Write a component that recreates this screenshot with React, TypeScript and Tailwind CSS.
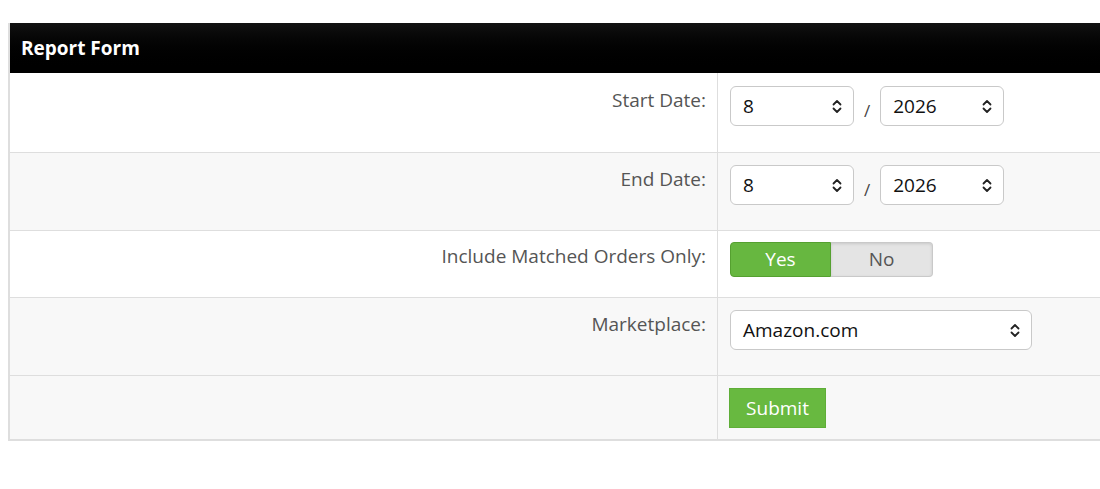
import React from "react";

const Chevrons = () => (
  <svg width="10" height="15" viewBox="0 0 10 15" fill="none" stroke="#222" strokeWidth="1.8" strokeLinecap="round" strokeLinejoin="round">
    <path d="M1.5 5.5 L5 2 L8.5 5.5" />
    <path d="M1.5 9.5 L5 13 L8.5 9.5" />
  </svg>
);

const FakeSelect = ({ value, w }: { value: string; w: string }) => (
  <div className={`${w} h-[40px] bg-white border border-[#c9c9c9] rounded-[6px] flex items-center justify-between pl-[12px] pr-[11px] text-[19px] text-[#111]`}>
    <span>{value}</span>
    <Chevrons />
  </div>
);

const Row = ({
  label,
  bg,
  h,
  labelPt,
  contentPt,
  last,
  children,
}: {
  label: string;
  bg: string;
  h: string;
  labelPt: string;
  contentPt: string;
  last?: boolean;
  children: React.ReactNode;
}) => (
  <div className={`flex ${h} ${bg} ${last ? "border-b-2" : "border-b"} border-[#dedede]`}>
    <div className={`w-[708px] shrink-0 text-right pr-[11px] ${labelPt} text-[19px] leading-[24px] text-[#555] border-r border-[#dedede]`}>
      {label}
    </div>
    <div className={`flex-1 pl-[12px] ${contentPt}`}>{children}</div>
  </div>
);

export default function App() {
  return (
    <div
      className="w-[1100px] h-[489px] overflow-hidden bg-white"
      style={{ fontFamily: '"Open Sans", "Noto Sans", sans-serif' }}
    >
      <div className="pt-[23px] pl-[8px]">
        <div className="w-[1130px] border-l-2 border-[#dedede]">
          <div className="h-[50px] bg-gradient-to-b from-[#111] to-[#000] flex items-center pl-[11px] text-white font-bold text-[19px]">
            Report Form
          </div>
          <Row label="Start Date:" bg="bg-white" h="h-[80px]" labelPt="pt-[15px]" contentPt="pt-[13px]">
            <div className="flex items-start">
              <FakeSelect value="8" w="w-[124px]" />
              <span className="mx-[10px] mt-[12px] text-[17px] text-[#444]">/</span>
              <FakeSelect value="2026" w="w-[124px]" />
            </div>
          </Row>
          <Row label="End Date:" bg="bg-[#f8f8f8]" h="h-[78px]" labelPt="pt-[14px]" contentPt="pt-[12px]">
            <div className="flex items-start">
              <FakeSelect value="8" w="w-[124px]" />
              <span className="mx-[10px] mt-[12px] text-[17px] text-[#444]">/</span>
              <FakeSelect value="2026" w="w-[124px]" />
            </div>
          </Row>
          <Row label="Include Matched Orders Only:" bg="bg-white" h="h-[67px]" labelPt="pt-[13px]" contentPt="pt-[11px]">
            <div className="flex w-[203px] h-[35px] text-[19px]">
              <div className="w-[101px] flex items-center justify-center bg-[#67b740] border border-[#55a030] rounded-l-[4px] text-white">
                Yes
              </div>
              <div className="w-[102px] flex items-center justify-center bg-[#e4e4e4] border border-[#c9c9c9] border-l-0 rounded-r-[4px] text-[#555] shadow-[inset_0_1px_3px_rgba(0,0,0,0.12)]">
                No
              </div>
            </div>
          </Row>
          <Row label="Marketplace:" bg="bg-[#f8f8f8]" h="h-[78px]" labelPt="pt-[14px]" contentPt="pt-[12px]">
            <FakeSelect value="Amazon.com" w="w-[302px]" />
          </Row>
          <Row label="" bg="bg-[#f8f8f8]" h="h-[65px]" labelPt="pt-[14px]" contentPt="pt-[12px]" last>
            <button className="-ml-px w-[97px] h-[40px] bg-[#68b940] border border-[#5fae38] text-white text-[19px]">
              Submit
            </button>
          </Row>
        </div>
      </div>
    </div>
  );
}
